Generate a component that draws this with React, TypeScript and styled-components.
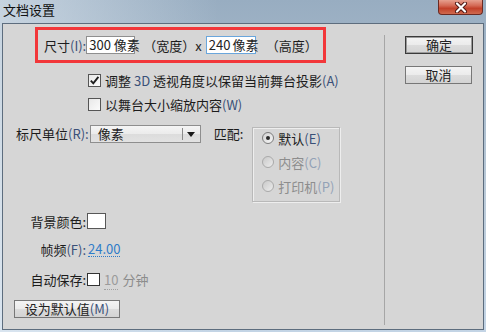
import React from 'react';
import styled, { createGlobalStyle, css } from 'styled-components';

const GlobalStyle = createGlobalStyle`
  html, body {
    margin: 0;
    padding: 0;
  }
  body {
    font-family: "Noto Sans CJK SC", "Noto Sans", sans-serif;
    font-size: 13px;
    color: #1c1c1c;
  }
`;

// Окно в стиле Windows 7
const Window = styled.div`
  width: 486px;
  height: 332px;
  display: flex;
  flex-direction: column;
  background:
    linear-gradient(90deg, rgba(235, 242, 248, 0.55), rgba(235, 242, 248, 0) 45%),
    linear-gradient(180deg, #98adc1 0%, #bccbd9 60%, #c3d4e5 100%);
  overflow: hidden;
`;

const TitleBar = styled.div`
  height: 23px;
  display: flex;
  align-items: flex-start;
  flex-shrink: 0;
`;

const Title = styled.div`
  font-size: 13px;
  line-height: 18px;
  padding: 1px 0 0 3px;
  color: #111;
`;

const CloseButton = styled.div`
  margin-left: auto;
  margin-right: 3px;
  width: 45px;
  height: 15px;
  box-sizing: border-box;
  border: 1px solid #6b2a22;
  border-top: none;
  border-radius: 0 0 4px 4px;
  background: linear-gradient(180deg, #e6a08f 0%, #d46a55 40%, #c2412a 60%, #cf6a4f 100%);
  display: flex;
  align-items: center;
  justify-content: center;
`;

const Client = styled.div`
  flex: 1;
  margin: 0 2px 2px 2px;
  border: 1px solid #5d6d7e;
  background: #d6d6d6;
  display: flex;
`;

const Main = styled.div`
  width: 381px;
  display: flex;
  flex-direction: column;
`;

const Divider = styled.div`
  width: 1px;
  margin: 11px 0 4px 0;
  background: #a6a6a6;
`;

const Side = styled.div`
  flex: 1;
  display: flex;
  flex-direction: column;
  gap: 12px;
  padding: 12px 0 0 20px;
`;

const Key = styled.span<{ $muted?: boolean }>`
  color: ${(p) => (p.$muted ? '#93a2b6' : '#3a5078')};
`;

const SizeBox = styled.div`
  margin: 3px 0 0 32px;
  width: 291px;
  height: 36px;
  box-sizing: border-box;
  border: 3px solid #f2373a;
  display: flex;
  align-items: center;
  padding-left: 6px;
  white-space: nowrap;
`;

const Field = styled.div<{ $focused?: boolean; $width: number }>`
  width: ${(p) => p.$width}px;
  height: 18px;
  box-sizing: border-box;
  background: #fff;
  border: 1px solid ${(p) => (p.$focused ? '#6aa6dc' : '#8f8f8f')};
  display: flex;
  align-items: center;
  padding-left: 2px;
  line-height: 16px;
  color: #222;
`;

const Caret = styled.span`
  width: 1px;
  height: 14px;
  background: #000;
  margin: 0 1px 0 1px;
`;

const Plain = styled.span<{ $gap?: number }>`
  margin-left: ${(p) => p.$gap ?? 0}px;
`;

const CheckRow = styled.div<{ $top: number }>`
  display: flex;
  align-items: center;
  height: 18px;
  margin: ${(p) => p.$top}px 0 0 85px;
  gap: 4px;
  white-space: nowrap;
`;

const Box = styled.div<{ $dark?: boolean }>`
  width: 13px;
  height: 13px;
  box-sizing: border-box;
  border: 1px solid ${(p) => (p.$dark ? '#333' : '#555')};
  background: ${(p) => (p.$dark ? '#fff' : 'linear-gradient(135deg, #e8e8e8, #fbfbfb)')};
  display: flex;
  align-items: center;
  justify-content: center;
  flex-shrink: 0;
`;

const RulerRow = styled.div`
  display: flex;
  align-items: flex-start;
  margin: 12px 0 0 13px;
  height: 77px;
  white-space: nowrap;
`;

const InlineLabel = styled.div`
  height: 18px;
  line-height: 18px;
`;

const Select = styled.div`
  width: 111px;
  height: 18px;
  box-sizing: border-box;
  margin-left: 1px;
  border: 1px solid #8e8e8e;
  background: linear-gradient(180deg, #f5f5f5 0%, #ebebeb 50%, #dcdcdc 51%, #e2e2e2 100%);
  display: flex;
  align-items: center;
  line-height: 16px;
`;

const SelectText = styled.span`
  flex: 1;
  padding-left: 7px;
`;

const SelectArrow = styled.div`
  width: 17px;
  height: 12px;
  border-left: 1px solid #8a8a8a;
  display: flex;
  align-items: center;
  justify-content: center;
`;

const MatchLabel = styled(InlineLabel)`
  margin-left: 13px;
`;

const GroupBox = styled.div`
  margin: 2px 0 0 9px;
  width: 88px;
  height: 75px;
  box-sizing: border-box;
  border: 1px solid #b9b9b9;
  box-shadow: inset 1px 1px 0 #eeeeee, 1px 1px 0 #eeeeee;
  display: flex;
  flex-direction: column;
  gap: 6px;
  padding: 1px 0 0 9px;
`;

const RadioItem = styled.div<{ $disabled?: boolean }>`
  display: flex;
  align-items: center;
  gap: 4px;
  height: 18px;
  color: ${(p) => (p.$disabled ? '#8d8d8d' : '#1c1c1c')};
`;

const Radio = styled.div<{ $checked?: boolean; $disabled?: boolean }>`
  width: 12px;
  height: 12px;
  box-sizing: border-box;
  border-radius: 50%;
  border: 1px solid ${(p) => (p.$disabled ? '#a9a9a9' : '#7c7c7c')};
  background: ${(p) =>
    p.$disabled
      ? 'linear-gradient(135deg, #c9c9c9, #ececec)'
      : 'linear-gradient(135deg, #d2d2d2, #f7f7f7)'};
  display: flex;
  align-items: center;
  justify-content: center;
  ${(p) =>
    p.$checked &&
    css`
      &::after {
        content: '';
        width: 4px;
        height: 4px;
        border-radius: 50%;
        background: #2a2a2a;
      }
    `}
`;

const FormRow = styled.div<{ $top: number }>`
  display: flex;
  align-items: center;
  height: 18px;
  margin-top: ${(p) => p.$top}px;
  white-space: nowrap;
`;

const FormLabel = styled.div`
  width: 83px;
  text-align: right;
  padding-right: 1px;
`;

const Swatch = styled.div`
  width: 19px;
  height: 16px;
  box-sizing: border-box;
  border: 1px solid #575757;
  background: #fff;
`;

const HotValue = styled.span<{ $muted?: boolean }>`
  color: ${(p) => (p.$muted ? '#9b9b9b' : '#2f7cc9')};
  border-bottom: 1px dotted ${(p) => (p.$muted ? '#a0a0a0' : '#2f7cc9')};
  line-height: 14px;
  margin-left: 1px;
`;

const Muted = styled.span`
  color: #8c8c8c;
  margin-left: 4px;
`;

const PushButton = styled.div<{ $primary?: boolean; $width: number }>`
  width: ${(p) => p.$width}px;
  height: 18px;
  box-sizing: border-box;
  border: 1px solid ${(p) => (p.$primary ? '#3a3a3a' : '#777')};
  ${(p) =>
    p.$primary &&
    css`
      box-shadow: inset 0 0 0 1px #9a9a9a;
    `}
  background: linear-gradient(180deg, #f4f4f4 0%, #ebebeb 50%, #dcdcdc 51%, #d3d3d3 100%);
  display: flex;
  align-items: center;
  justify-content: center;
  line-height: 16px;
  color: #222;
  white-space: nowrap;
`;

const DefaultButtonWrap = styled.div`
  margin: 12px 0 0 11px;
`;

const CheckMark = () => (
  <svg width="11" height="11" viewBox="0 0 11 11">
    <path d="M1.8 5.6 L4.3 8.3 L9.4 1.8" fill="none" stroke="#1e1e1e" strokeWidth="1.9" />
  </svg>
);

const CloseGlyph = () => (
  <svg width="14" height="11" viewBox="0 0 14 11">
    <path d="M3 1.5 L11 9.5 M11 1.5 L3 9.5" stroke="#4a1410" strokeWidth="4" strokeLinecap="round" />
    <path d="M3 1.5 L11 9.5 M11 1.5 L3 9.5" stroke="#ffffff" strokeWidth="2.2" strokeLinecap="round" />
  </svg>
);

const DownArrow = () => (
  <svg width="8" height="5" viewBox="0 0 8 5">
    <path d="M0 0 H8 L4 5 Z" fill="#1a1a1a" />
  </svg>
);

const App: React.FC = () => {
  const matchOptions = [
    { text: '默认', key: 'E', checked: true, disabled: false },
    { text: '内容', key: 'C', checked: false, disabled: true },
    { text: '打印机', key: 'P', checked: false, disabled: true },
  ];

  return (
    <>
      <GlobalStyle />
      <Window>
        <TitleBar>
          <Title>文档设置</Title>
          <CloseButton>
            <CloseGlyph />
          </CloseButton>
        </TitleBar>
        <Client>
          <Main>
            <SizeBox>
              <span>
                尺寸<Key>(I):</Key>
              </span>
              <Field $width={49}>300 像素</Field>
              <Plain $gap={8}>（宽度）x</Plain>
              <Plain $gap={4} />
              <Field $width={50} $focused>
                240
                <Caret />
                像素
              </Field>
              <Plain $gap={10}>（高度）</Plain>
            </SizeBox>

            <CheckRow $top={8}>
              <Box>
                <CheckMark />
              </Box>
              <span>
                调整 <Key>3D</Key> 透视角度以保留当前舞台投影<Key>(A)</Key>
              </span>
            </CheckRow>
            <CheckRow $top={6}>
              <Box />
              <span>
                以舞台大小缩放内容<Key>(W)</Key>
              </span>
            </CheckRow>

            <RulerRow>
              <InlineLabel>
                标尺单位<Key>(R):</Key>
              </InlineLabel>
              <Select>
                <SelectText>像素</SelectText>
                <SelectArrow>
                  <DownArrow />
                </SelectArrow>
              </Select>
              <MatchLabel>匹配:</MatchLabel>
              <GroupBox>
                {matchOptions.map((o) => (
                  <RadioItem key={o.key} $disabled={o.disabled}>
                    <Radio $checked={o.checked} $disabled={o.disabled} />
                    <span>
                      {o.text}
                      <Key $muted={o.disabled}>({o.key})</Key>
                    </span>
                  </RadioItem>
                ))}
              </GroupBox>
            </RulerRow>

            <FormRow $top={10}>
              <FormLabel>背景颜色:</FormLabel>
              <Swatch />
            </FormRow>
            <FormRow $top={10}>
              <FormLabel>
                帧频<Key>(F):</Key>
              </FormLabel>
              <HotValue>24.00</HotValue>
            </FormRow>
            <FormRow $top={12}>
              <FormLabel>自动保存:</FormLabel>
              <Box $dark />
              <Plain $gap={3}>
                <HotValue $muted>10</HotValue>
              </Plain>
              <Muted>分钟</Muted>
            </FormRow>

            <DefaultButtonWrap>
              <PushButton $width={106}>
                设为默认值<Key>(M)</Key>
              </PushButton>
            </DefaultButtonWrap>
          </Main>
          <Divider />
          <Side>
            <PushButton $width={68} $primary>
              确定
            </PushButton>
            <PushButton $width={67}>取消</PushButton>
          </Side>
        </Client>
      </Window>
    </>
  );
};

export default App;
